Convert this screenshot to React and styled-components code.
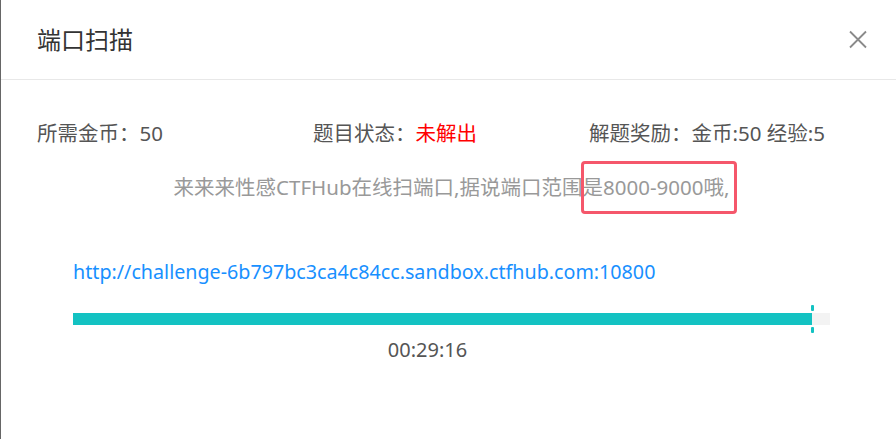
import React from 'react';
import styled, { createGlobalStyle } from 'styled-components';

const GlobalStyle = createGlobalStyle`
  html, body {
    margin: 0;
    padding: 0;
    background: #fff;
  }
  body {
    font-family: 'Noto Sans', 'Noto Sans CJK SC', sans-serif;
  }
`;

const Dialog = styled.div`
  width: 896px;
  height: 439px;
  box-sizing: border-box;
  background: #fff;
  border-left: 1px solid #666;
  overflow: hidden;
`;

const Header = styled.div`
  height: 80px;
  box-sizing: border-box;
  border-bottom: 1px solid #e8e8e8;
  display: flex;
  align-items: center;
  justify-content: space-between;
  padding: 0 29px 0 36px;
`;

const Title = styled.h2`
  margin: 0;
  font-size: 24px;
  font-weight: 400;
  color: #333;
  line-height: 32px;
`;

const CloseButton = styled.button`
  border: 0;
  padding: 0;
  background: transparent;
  display: flex;
  cursor: pointer;
`;

const Body = styled.div`
  padding: 0 30px 0 36px;
`;

const InfoRow = styled.div`
  display: grid;
  grid-template-columns: repeat(3, 276px);
  margin-top: 39px;
  font-size: 20.5px;
  line-height: 28px;
  color: #555;
`;

const Status = styled.span`
  color: #f00;
`;

const Description = styled.p`
  margin: 26px 0 0;
  text-align: center;
  font-size: 20.5px;
  line-height: 28px;
  color: #999;
`;

const Marked = styled.span`
  position: relative;

  &::after {
    content: '';
    position: absolute;
    left: -2px;
    right: -8px;
    top: -12px;
    bottom: -13px;
    border: 3px solid #f5576b;
    border-radius: 4px;
  }
`;

const Link = styled.a`
  display: block;
  margin: 57px 0 0 36px;
  font-size: 19.7px;
  line-height: 28px;
  color: #1890ff;
  text-decoration: none;
`;

const Track = styled.div`
  position: relative;
  margin: 27px 36px 0;
  height: 12px;
  background: #f3f3f3;
`;

const Fill = styled.div`
  height: 100%;
  background: #13c2c2;
`;

const Tick = styled.span`
  position: absolute;
  width: 3px;
  height: 6px;
  border-radius: 1px;
  background: #13c2c2;
  transform: translateX(-1px);
  ${(p) => (p.$top ? 'top: -8px;' : 'bottom: -8px;')}
`;

const Time = styled.div`
  margin-top: 11px;
  padding-right: 48px;
  text-align: center;
  font-size: 20px;
  line-height: 28px;
  color: #555;
`;

function CloseIcon() {
  return (
    <svg width="18" height="19" viewBox="0 0 18 19" fill="none">
      <path d="M1 1.5L17 17.5M17 1.5L1 17.5" stroke="#8a8a8a" strokeWidth="1.8" />
    </svg>
  );
}

export default function App() {
  const progress = (738 / 756) * 100;

  return (
    <>
      <GlobalStyle />
      <Dialog>
        <Header>
          <Title>端口扫描</Title>
          <CloseButton aria-label="close">
            <CloseIcon />
          </CloseButton>
        </Header>
        <Body>
          <InfoRow>
            <span>所需金币：50</span>
            <span>
              题目状态：<Status>未解出</Status>
            </span>
            <span>解题奖励：金币:50 经验:5</span>
          </InfoRow>
          <Description>
            来来来性感CTFHub在线扫端口,据说端口范围<Marked>是8000-9000哦,</Marked>
          </Description>
          <Link href="#">http://challenge-6b797bc3ca4c84cc.sandbox.ctfhub.com:10800</Link>
          <Track>
            <Fill style={{ width: `${progress}%` }} />
            <Tick $top style={{ left: `${progress}%` }} />
            <Tick style={{ left: `${progress}%` }} />
          </Track>
          <Time>00:29:16</Time>
        </Body>
      </Dialog>
    </>
  );
}
